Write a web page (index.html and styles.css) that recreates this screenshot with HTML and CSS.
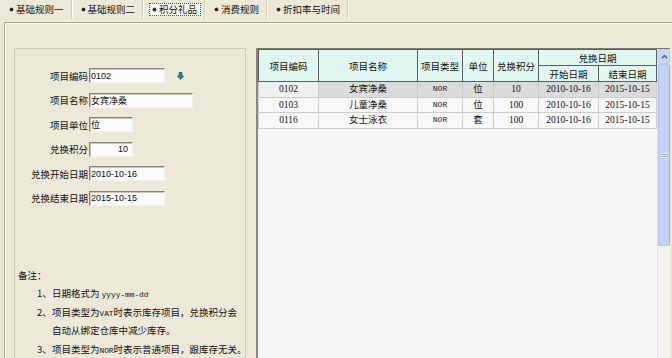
FILE: index.html
```html
<!DOCTYPE html>
<html lang="zh-CN">
<head>
  <meta charset="UTF-8" />
  <title>积分礼品</title>
  <link rel="stylesheet" href="styles.css">
</head>
<body>

  <!-- Tab strip -->
  <div class="tabs">
    <div class="tab"><span class="tab-label">基础规则一</span></div>
    <div class="tab"><span class="tab-label">基础规则二</span></div>
    <div class="tab active"><span class="tab-label">积分礼品</span></div>
    <div class="tab"><span class="tab-label">消费规则</span></div>
    <div class="tab"><span class="tab-label">折扣率与时间</span></div>
  </div>

  <div class="frame">
    <!-- Edit form -->
    <div class="left-panel">
      <div class="form">
        <div class="form-row">
          <label>项目编码</label>
          <input class="field w76" value="0102" />
          <svg class="pick-icon" width="7" height="8" viewBox="0 0 7 8">
            <path d="M2 0.5h3v3.5h1.6L3.5 7.6 0.4 4H2z" fill="#1f8a82" stroke="#0f5450" stroke-width="0.6"/>
          </svg>
        </div>
        <div class="form-row">
          <label>项目名称</label>
          <input class="field w104" value="女宾净桑" />
        </div>
        <div class="form-row">
          <label>项目单位</label>
          <input class="field w44" value="位" />
        </div>
        <div class="form-row">
          <label>兑换积分</label>
          <input class="field w44 num" value="10" />
        </div>
        <div class="form-row">
          <label>兑换开始日期</label>
          <input class="field w76" value="2010-10-16" />
        </div>
        <div class="form-row">
          <label>兑换结束日期</label>
          <input class="field w76" value="2015-10-15" />
        </div>
      </div>

      <div class="notes">
        <div class="notes-title">备注：</div>
        <div class="note"><span class="note-no">1、</span><span>日期格式为 <span class="mono">yyyy-mm-dd</span></span></div>
        <div class="note"><span class="note-no">2、</span><span>项目类型为<span class="mono">VAT</span>时表示库存项目，兑换积分会</span></div>
        <div class="note"><span class="note-no"></span><span>自动从绑定仓库中减少库存。</span></div>
        <div class="note"><span class="note-no">3、</span><span>项目类型为<span class="mono">NOR</span>时表示普通项目，跟库存无关。</span></div>
      </div>
    </div>

    <!-- Item grid -->
    <div class="grid-wrap">
      <div class="grid">
        <table>
          <colgroup>
            <col style="width:60px"><col style="width:99px"><col style="width:45px"><col style="width:31px">
            <col style="width:45px"><col style="width:60px"><col style="width:58px">
          </colgroup>
          <thead>
            <tr>
              <th rowspan="2">项目编码</th>
              <th rowspan="2">项目名称</th>
              <th rowspan="2">项目类型</th>
              <th rowspan="2">单位</th>
              <th rowspan="2">兑换积分</th>
              <th colspan="2">兑换日期</th>
            </tr>
            <tr>
              <th>开始日期</th>
              <th>结束日期</th>
            </tr>
          </thead>
          <tbody>
            <tr class="selected">
              <td class="first">0102</td><td>女宾净桑</td><td class="type">NOR</td><td>位</td><td>10</td><td>2010-10-16</td><td>2015-10-15</td>
            </tr>
            <tr>
              <td>0103</td><td>儿童净桑</td><td class="type">NOR</td><td>位</td><td>100</td><td>2010-10-16</td><td>2015-10-15</td>
            </tr>
            <tr>
              <td>0116</td><td>女士泳衣</td><td class="type">NOR</td><td>套</td><td>100</td><td>2010-10-16</td><td>2015-10-15</td>
            </tr>
          </tbody>
        </table>
      </div>
      <div class="vscroll">
        <div class="vscroll-btn">
          <svg width="7" height="5" viewBox="0 0 7 5"><path d="M0.8 4.2L3.5 1.4 6.2 4.2" fill="none" stroke="#4d6185" stroke-width="1.4"/></svg>
        </div>
        <div class="vscroll-thumb"><span class="grip"></span></div>
      </div>
    </div>
  </div>

</body>
</html>
```

FILE: styles.css
```css
html, body {
  margin: 0;
  height: 358px;
  overflow: hidden;
}

body {
  background-color: #ece9d8;
  font-family: "Noto Sans CJK SC", sans-serif;
  font-size: 9.5px;
  color: #111;
}

/* Tabs */
.tabs {
  display: flex;
  height: 19px;
}

.tab {
  display: flex;
  align-items: center;
  padding: 0 3px 0 6px;
  border-right: 1px solid #d2cebe;
  box-shadow: 1px 0 0 #fbfaf5;
}

.tab-label {
  display: flex;
  align-items: center;
  gap: 3px;
  height: 11px;
  line-height: 11px;
  padding: 0 3px;
  border: 1px dotted transparent;
}

.tab-label::before {
  content: "";
  width: 3px;
  height: 3px;
  border-radius: 50%;
  background-color: #222;
  box-shadow: 0 0 0 0.5px #555;
}

.tab.active .tab-label {
  border-color: #555;
  background-color: #f9f9f5;
}

/* Frame */
.frame {
  display: flex;
  gap: 10px;
  height: 360px;
  margin: 3px 0 0 4px;
  padding: 25px 3px 0 9px;
  border-top: 1px solid #aca899;
  border-left: 1px solid #aca899;
  box-shadow: inset 1px 1px 0 #fbfaf5;
}

.left-panel {
  width: 232px;
  box-sizing: border-box;
  border: 1px solid #cfcbb7;
  padding-top: 19px;
}

.form {
  display: flex;
  flex-direction: column;
  gap: 9.6px;
}

.form-row {
  display: flex;
  align-items: center;
  height: 15px;
}

.form-row label {
  width: 73px;
  margin-right: 1px;
  text-align: right;
}

.field {
  box-sizing: border-box;
  height: 15px;
  padding: 0 1px;
  margin: 0;
  border: 1px solid;
  border-color: #85847a #f3f2ec #f3f2ec #85847a;
  box-shadow: inset 1px 1px 0 #c9c6b8;
  background-color: #fbfbfa;
  font-family: "Liberation Sans", "Noto Sans CJK SC", sans-serif;
  font-size: 9px;
  color: #111;
  outline: none;
}

.field.num {
  text-align: right;
  padding-right: 4px;
}

.w44 { width: 44px; }
.w76 { width: 76px; }
.w104 { width: 104px; }

.pick-icon {
  margin-left: 12px;
}

/* Notes */
.notes {
  margin-top: 60px;
  padding-left: 3px;
  white-space: nowrap;
}

.notes-title,
.note {
  height: 18.5px;
  line-height: 18.5px;
}

.note {
  display: flex;
  padding-left: 19px;
}

.note-no {
  width: 15px;
  flex-shrink: 0;
}

.mono {
  font-family: "Liberation Mono", monospace;
  font-size: 7.8px;
  line-height: 10px;
}

/* Grid */
.grid-wrap {
  flex: 1;
  display: flex;
  border-top: 1px solid #7c7a6f;
  border-left: 2px solid #8a887d;
}

.grid {
  flex: 1;
  background-color: #f7f7f7;
  border-right: 1px solid #e5e4db;
}

table {
  border-collapse: collapse;
  table-layout: fixed;
  width: 398px;
  font-family: "Liberation Serif", "Noto Sans CJK SC", serif;
  font-size: 9.5px;
}

th {
  height: 15px;
  padding: 0;
  font-weight: normal;
  background-color: #e0f8f1;
  border: 1px solid #5d5d5d;
}

td {
  height: 14.5px;
  padding: 0;
  text-align: center;
  background-color: #f8f8f8;
  border: 1px solid #cdcdcd;
  line-height: 12px;
}

td.type {
  font-family: "Liberation Mono", monospace;
  font-size: 8px;
  color: #222;
}

tr.selected td {
  background-color: #dbdbdb;
}

tr.selected td.first {
  background-color: #efefef;
}

/* Vertical scrollbar */
.vscroll {
  width: 12px;
  display: flex;
  flex-direction: column;
  background-color: #f3f2ec;
}

.vscroll-btn {
  height: 13px;
  display: flex;
  align-items: center;
  justify-content: center;
  background-color: #c8d7fb;
  border: 1px solid #b6c9f4;
  border-radius: 2px;
}

.vscroll-thumb {
  height: 180px;
  display: flex;
  align-items: center;
  justify-content: center;
  background-color: #c4d4f9;
  border: 1px solid #aec3f1;
  border-right-color: #9db3e6;
  border-radius: 2px;
}

.grip {
  width: 5px;
  height: 5px;
  background: repeating-linear-gradient(#e8eefc 0 1px, #9fb3e0 1px 2px);
}
```
